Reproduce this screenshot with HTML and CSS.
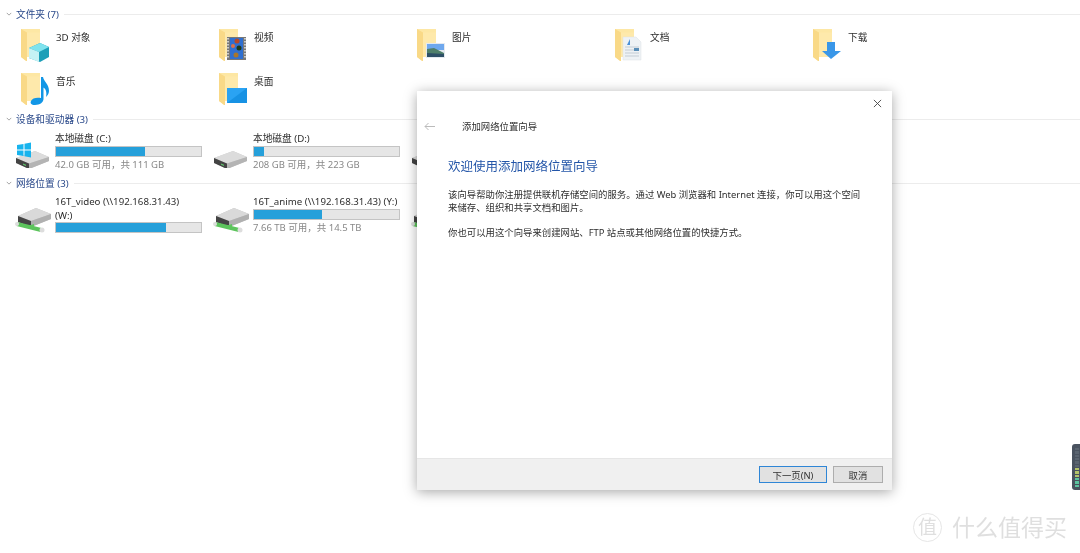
FILE: index.html
```html
<!DOCTYPE html>
<html lang="zh-CN">
<head>
  <meta charset="UTF-8" />
  <title>添加网络位置向导</title>
  <link rel="stylesheet" href="styles.css">
</head>
<body>
  <svg class="defs" width="0" height="0">
    <defs>
      <symbol id="folder" viewBox="0 0 32 36">
        <path d="M1 1H20V29H7V33L1 29Z" fill="#fde7a4"/>
        <path d="M7 4.500H20V29H7Z" fill="#fee9ab"/>
        <path d="M1 1L7 4.500V33L6 33L1 29Z" fill="#f9d987"/>
      </symbol>
      <symbol id="drive" viewBox="0 0 36 26">
        <path d="M1 16L20 9L34 15V19L14 27L1 21Z" fill="#c9c9c9"/>
        <path d="M1 16L20 9L34 15L14 21.500Z" fill="#dcdcdc"/>
        <path d="M1 16L14 21.500V27L1 21Z" fill="#444"/>
        <path d="M14 21.500L34 15V19L14 27Z" fill="#b4b4b4"/>
        <path d="M8 21.500L11 22.800V24L8 22.700Z" fill="#5fc46a"/>
      </symbol>
      <symbol id="netdrive" viewBox="0 0 38 26">
        <path d="M3 9L21 1L36 7V12L16 20L3 15Z" fill="#c4c4c4"/>
        <path d="M3 9L21 1L36 7L16 14Z" fill="#d9d9d9"/>
        <path d="M3 9L16 14V20L3 15Z" fill="#444"/>
        <path d="M16 14L36 7V12L16 20Z" fill="#b0b0b0"/>
        <path d="M2 17L26 23" fill="none" stroke="#5cc45c" stroke-width="4"/>
        <path d="M13 19L19 17V21L15 22Z" fill="#5cc45c"/>
        <circle cx="2" cy="17" r="2" fill="#ddd"/>
        <circle cx="27" cy="23" r="2.500" fill="#ddd"/>
      </symbol>
    </defs>
  </svg>

  <div class="explorer">
    <div class="group-head">
      <svg class="chev" viewBox="0 0 8 5"><path d="M1 1L4 4L7 1"/></svg>
      <span>文件夹 (7)</span>
    </div>
    <div class="tiles folders">
      <div class="tile">
        <div class="tile-icon">
          <svg class="folder-icon" viewBox="0 0 32 36">
            <use href="#folder" width="32" height="36"/>
            <path d="M9 20L20 15L29 19V29L20 34L9 30Z" fill="#1d9fb8"/>
            <path d="M9 20L20 15L29 19L19 24Z" fill="#7fe3ee"/>
            <path d="M9 20L19 24V34L9 30Z" fill="#c5f2f5"/>
          </svg>
        </div>
        <div class="tile-text"><div class="name">3D 对象</div></div>
      </div>
      <div class="tile">
        <div class="tile-icon">
          <svg class="folder-icon" viewBox="0 0 32 36">
            <use href="#folder" width="32" height="36"/>
            <rect x="9" y="9" width="19" height="23" fill="#777"/>
            <path d="M10 10V31M27 10V31" stroke="#e8e8e8" stroke-width="1.500" stroke-dasharray="1.500 1.500"/>
            <rect x="12" y="10" width="13" height="21" fill="#2f6fd0"/>
            <circle cx="19" cy="13" r="2.500" fill="#b5482a"/>
            <circle cx="15" cy="18" r="2" fill="#d9714a"/>
            <circle cx="21" cy="20" r="2.500" fill="#1d3a1d"/>
            <circle cx="18" cy="27" r="2.500" fill="#a8762a"/>
          </svg>
        </div>
        <div class="tile-text"><div class="name">视频</div></div>
      </div>
      <div class="tile">
        <div class="tile-icon">
          <svg class="folder-icon" viewBox="0 0 32 36">
            <use href="#folder" width="32" height="36"/>
            <rect x="10" y="15" width="19" height="15" fill="#e4e9ef"/>
            <rect x="11" y="16" width="17" height="6" fill="#6fa8ee"/>
            <path d="M11 21L18 20L28 25V29H11Z" fill="#4f7f6a"/>
            <path d="M11 25L28 26V29H11Z" fill="#2d4f66"/>
          </svg>
        </div>
        <div class="tile-text"><div class="name">图片</div></div>
      </div>
      <div class="tile">
        <div class="tile-icon">
          <svg class="folder-icon" viewBox="0 0 32 36">
            <use href="#folder" width="32" height="36"/>
            <path d="M9 9H22L27 14V32H9Z" fill="#eef2f5" stroke="#dce1e6" stroke-width=".5"/>
            <path d="M13 17L16 11V17Z" fill="#4a90d9"/>
            <path d="M11 19H25M11 22H25M11 25H25M11 28H25" stroke="#c3ccd4" stroke-width="1"/>
            <rect x="20" y="20" width="5" height="3" fill="#5b8fb8"/>
          </svg>
        </div>
        <div class="tile-text"><div class="name">文档</div></div>
      </div>
      <div class="tile">
        <div class="tile-icon">
          <svg class="folder-icon" viewBox="0 0 32 36">
            <use href="#folder" width="32" height="36"/>
            <path d="M15 14H23V23H29L19 31L10 23H15Z" fill="#3a97e8"/>
          </svg>
        </div>
        <div class="tile-text"><div class="name">下载</div></div>
      </div>
      <div class="tile">
        <div class="tile-icon">
          <svg class="folder-icon" viewBox="0 0 32 36">
            <use href="#folder" width="32" height="36"/>
            <path d="M21 5L23 5C24 10 29 12 29 19C29 22 27 24 26 25C27 21 26 17 23.500 15.500V27C23.500 30 20 33 15 33C11 33 10 31 11 29C12 26 17 25 21 26Z" fill="#1296e6"/>
          </svg>
        </div>
        <div class="tile-text"><div class="name">音乐</div></div>
      </div>
      <div class="tile">
        <div class="tile-icon">
          <svg class="folder-icon" viewBox="0 0 32 36">
            <use href="#folder" width="32" height="36"/>
            <rect x="9" y="16" width="20" height="15" fill="#2aa3f3"/>
            <path d="M9 31L29 16V31Z" fill="#1792e4"/>
          </svg>
        </div>
        <div class="tile-text"><div class="name">桌面</div></div>
      </div>
    </div>

    <div class="group-head">
      <svg class="chev" viewBox="0 0 8 5"><path d="M1 1L4 4L7 1"/></svg>
      <span>设备和驱动器 (3)</span>
    </div>
    <div class="tiles drives">
      <div class="tile">
        <div class="tile-icon">
          <svg class="drive-icon" viewBox="0 0 36 26"><use href="#drive" width="36" height="26"/>
            <path d="M2 3L8.500 2V7.500H2ZM9.500 1.800L16 .5V7.500H9.500ZM2 8.500H8.500V14L2 13ZM9.500 8.500H16V15.500L9.500 14.200Z" fill="#18b4ee"/>
          </svg>
        </div>
        <div class="tile-text">
          <div class="name">本地磁盘 (C:)</div>
          <div class="bar"><div class="bar-fill" style="width:61.500%"></div></div>
          <div class="sub">42.0 GB 可用，共 111 GB</div>
        </div>
      </div>
      <div class="tile">
        <div class="tile-icon">
          <svg class="drive-icon" viewBox="0 0 36 26"><use href="#drive" width="36" height="26"/></svg>
        </div>
        <div class="tile-text">
          <div class="name">本地磁盘 (D:)</div>
          <div class="bar"><div class="bar-fill" style="width:7%"></div></div>
          <div class="sub">208 GB 可用，共 223 GB</div>
        </div>
      </div>
      <div class="tile">
        <div class="tile-icon">
          <svg class="drive-icon" viewBox="0 0 36 26"><use href="#drive" width="36" height="26"/></svg>
        </div>
      </div>
    </div>

    <div class="group-head">
      <svg class="chev" viewBox="0 0 8 5"><path d="M1 1L4 4L7 1"/></svg>
      <span>网络位置 (3)</span>
    </div>
    <div class="tiles nets">
      <div class="tile">
        <div class="tile-icon">
          <svg class="net-icon" viewBox="0 0 38 26"><use href="#netdrive" width="38" height="26"/></svg>
        </div>
        <div class="tile-text">
          <div class="name">16T_video (\\192.168.31.43)<br>(W:)</div>
          <div class="bar bar-lift"><div class="bar-fill" style="width:76%"></div></div>
        </div>
      </div>
      <div class="tile">
        <div class="tile-icon">
          <svg class="net-icon" viewBox="0 0 38 26"><use href="#netdrive" width="38" height="26"/></svg>
        </div>
        <div class="tile-text">
          <div class="name">16T_anime (\\192.168.31.43) (Y:)</div>
          <div class="bar"><div class="bar-fill" style="width:47%"></div></div>
          <div class="sub">7.66 TB 可用，共 14.5 TB</div>
        </div>
      </div>
      <div class="tile">
        <div class="tile-icon">
          <svg class="net-icon" viewBox="0 0 38 26"><use href="#netdrive" width="38" height="26"/></svg>
        </div>
      </div>
    </div>
  </div>

  <div class="wizard">
    <button class="wizard-close" type="button" aria-label="关闭">
      <svg viewBox="0 0 10 10"><path d="M1 1L9 9M9 1L1 9"/></svg>
    </button>
    <div class="wizard-head">
      <svg class="back" viewBox="0 0 11 9"><path d="M11 4.500H1M4.500 1L1 4.500L4.500 8"/></svg>
      <span>添加网络位置向导</span>
    </div>
    <div class="wizard-body">
      <h1>欢迎使用添加网络位置向导</h1>
      <p>该向导帮助你注册提供联机存储空间的服务。通过 Web 浏览器和 Internet 连接，你可以用这个空间来储存、组织和共享文档和图片。</p>
      <p>你也可以用这个向导来创建网站、FTP 站点或其他网络位置的快捷方式。</p>
    </div>
    <div class="wizard-foot">
      <button class="btn btn-primary" type="button">下一页(N)</button>
      <button class="btn" type="button">取消</button>
    </div>
  </div>

  <div class="side-widget">
    <i></i><i></i><i></i><i></i><i></i><i></i>
    <i class="lv-y"></i><i class="lv-y"></i><i class="lv-y"></i><i class="lv-g"></i><i class="lv-g"></i><i class="lv-g"></i>
  </div>

  <div class="watermark">
    <span class="wm-badge">值</span>
    <span>什么值得买</span>
  </div>
</body>
</html>
```

FILE: styles.css
```css
html, body {
  margin: 0;
  height: 553px;
  overflow: hidden;
  background: #fff;
}
body {
  font-family: "Noto Sans", "Noto Sans CJK SC", sans-serif;
  font-size: 9.700px;
  color: #2e2e2e;
  /* the source shot is a bit soft */
  filter: blur(0.3px);
}
.defs {
  display: block;
}
.explorer {
  padding: 7px 0 0 0;
}
.group-head {
  display: flex;
  align-items: center;
  height: 14px;
  padding-left: 6px;
  color: #2b4a8b;
}
.group-head span {
  margin-left: 4px;
}
.group-head::after {
  content: "";
  flex: 1;
  height: 1px;
  margin-left: 5px;
  background: #ececec;
}
.chev {
  width: 6px;
  height: 4px;
  fill: none;
  stroke: #888;
  stroke-width: 1;
}
.tiles {
  display: grid;
  grid-template-columns: repeat(5, 198px);
  padding-left: 14px;
}
.folders {
  margin-top: 7px;
  margin-bottom: 4px;
  grid-auto-rows: 36px;
  row-gap: 8px;
}
.folders .tile-text {
  padding: 3px 0 0 1px;
}
.drives {
  margin-top: 6px;
  margin-bottom: 4px;
  height: 40px;
}
.nets {
  margin-top: 5px;
}
.tile {
  display: flex;
}
.tile-icon {
  flex: none;
  width: 41px;
}
.folder-icon {
  display: block;
  width: 32px;
  height: 36px;
  margin-left: 6px;
}
.drive-icon {
  display: block;
  width: 36px;
  height: 26px;
  margin: 10px 0 0 1px;
}
.net-icon {
  display: block;
  width: 38px;
  height: 26px;
  margin: 12px 0 0 1px;
}
.tile-text {
  width: 147px;
}
.name {
  line-height: 14px;
}
.sub {
  padding-top: 1px;
  font-size: 9.500px;
  line-height: 14px;
  color: #888;
}
.bar {
  height: 11px;
  box-sizing: border-box;
  background: #e6e6e6;
  border: 1px solid #c4c4c4;
}
.bar-lift {
  margin-top: -1px;
}
.bar-fill {
  height: 100%;
  background: #26a0da;
}
.wizard {
  position: absolute;
  left: 417px;
  top: 91px;
  width: 475px;
  height: 399px;
  display: flex;
  flex-direction: column;
  font-size: 9.400px;
  background: #fff;
  box-shadow: 0 2px 12px rgba(0, 0, 0, 0.35);
}
.wizard-close {
  position: absolute;
  right: 9px;
  top: 7px;
  width: 10px;
  height: 10px;
  padding: 0;
  border: none;
  background: none;
}
.wizard-close svg {
  display: block;
  width: 9px;
  height: 9px;
  fill: none;
  stroke: #444;
  stroke-width: 1;
}
.wizard-head {
  display: flex;
  align-items: center;
  height: 14px;
  padding: 28px 0 0 7px;
}
.back {
  width: 11px;
  height: 9px;
  fill: none;
  stroke: #bbb;
  stroke-width: 1;
  margin-right: 27px;
}
.wizard-body {
  flex: 1;
  padding: 25px 28px 0 31px;
}
.wizard-body h1 {
  margin: 0 0 12px;
  font-size: 12.500px;
  font-weight: 400;
  line-height: 18px;
  color: #2355a8;
}
.wizard-body p {
  margin: 0 0 12px;
  line-height: 13px;
}
.wizard-foot {
  display: flex;
  justify-content: flex-end;
  align-items: flex-start;
  gap: 6px;
  height: 32px;
  box-sizing: border-box;
  padding: 7px 9px 0 0;
  background: #f0f0f0;
  border-top: 1px solid #e6e6e6;
}
.btn {
  width: 50px;
  height: 17px;
  padding: 0;
  font: inherit;
  color: #333;
  background: #e1e1e1;
  border: 1px solid #adadad;
}
.btn-primary {
  width: 68px;
  border: 1px solid #2f86d6;
}
.side-widget {
  position: absolute;
  right: 0;
  top: 444px;
  width: 8px;
  height: 46px;
  box-sizing: border-box;
  padding: 4px 1px 3px 3px;
  display: flex;
  flex-direction: column;
  gap: 1px;
  background: #4a5360;
  border-radius: 3px 0 0 3px;
}
.side-widget i {
  flex: 1;
  background: #5a6470;
}
.side-widget .lv-y {
  background: #b3c46a;
}
.side-widget .lv-g {
  background: #5cc4a0;
}
.watermark {
  position: absolute;
  left: 913px;
  top: 513px;
  display: flex;
  align-items: center;
  gap: 10px;
  font-size: 23px;
  line-height: 29px;
  color: #dfdfdf;
}
.wm-badge {
  width: 29px;
  height: 29px;
  box-sizing: border-box;
  border: 1px solid #e6e6e6;
  border-radius: 50%;
  font-size: 19px;
  line-height: 26px;
  text-align: center;
}
```
